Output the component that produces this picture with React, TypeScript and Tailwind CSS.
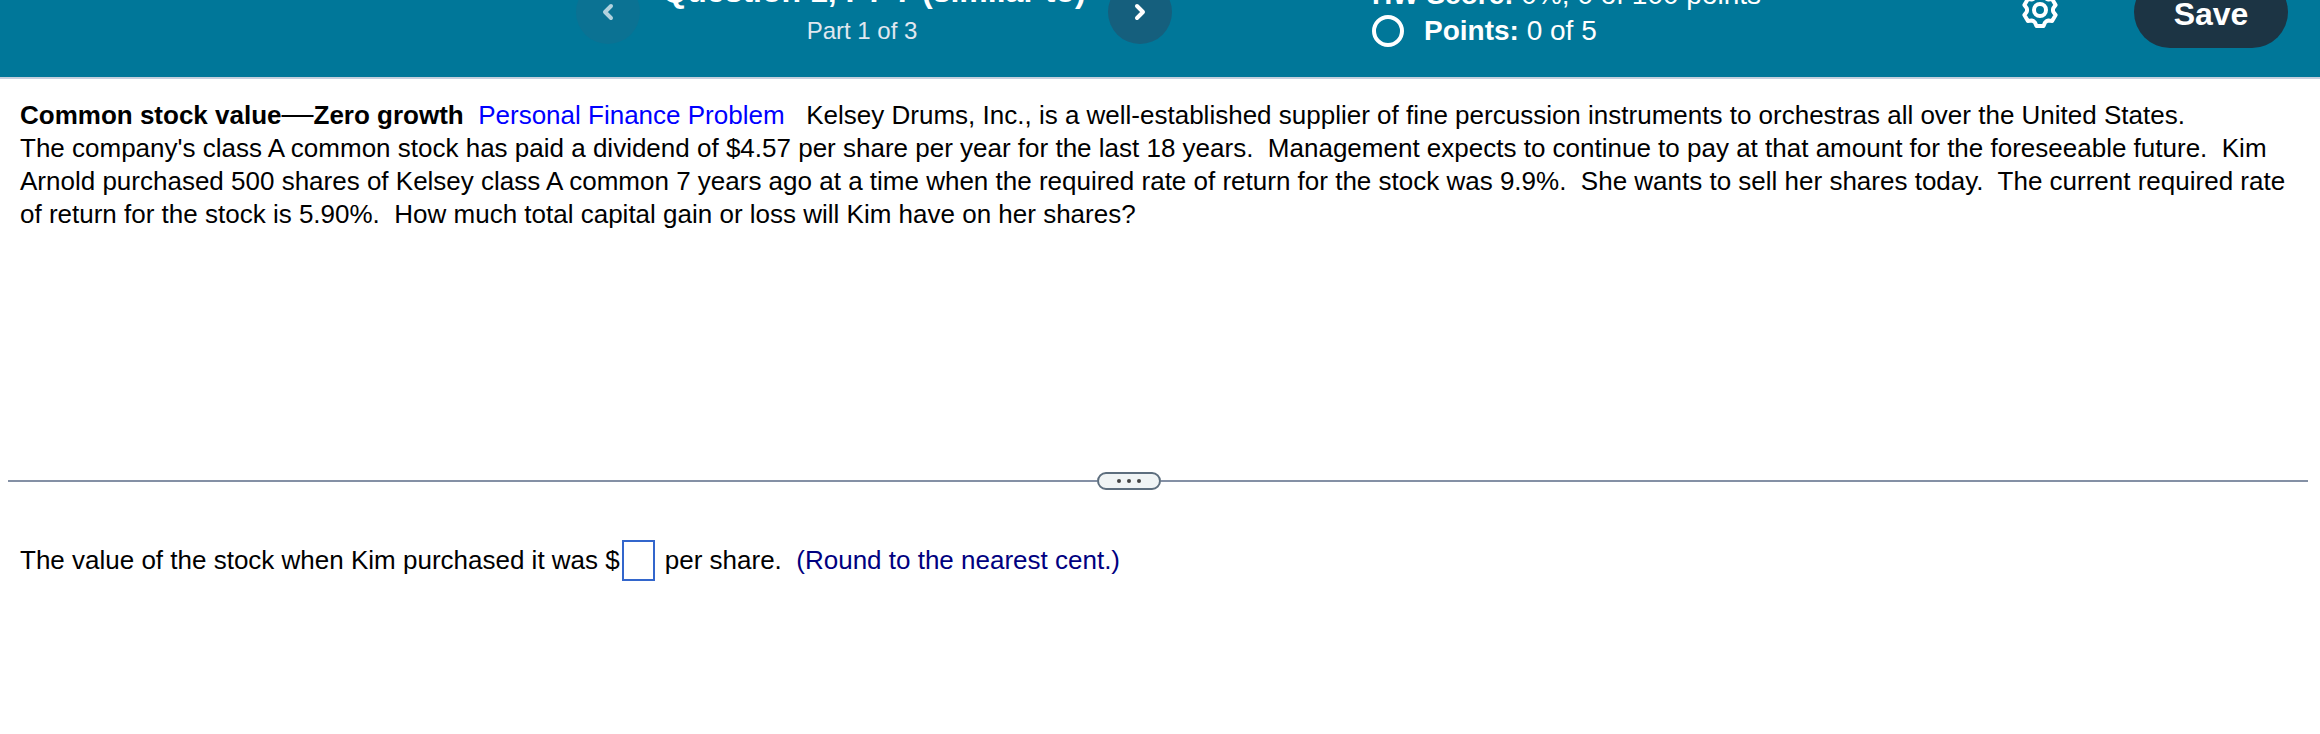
import { ChevronLeft, ChevronRight } from "lucide-react";

function GearIcon() {
  return (
    <svg width="40" height="40" viewBox="-20 -20 40 40" fill="none" stroke="#fff" strokeWidth="4" strokeLinejoin="round" aria-hidden>
      <path d="M-3.5 16H3.5L5 12.5Q6.600 10.800 8.300 10.600L12.100 11L15.600 5L13.300 1.900Q12.600 0 13.300-1.900L15.600-5L12.100-11L8.300-10.600Q6.600-10.800 5-12.500L3.500-16H-3.500L-5-12.500Q-6.600-10.800-8.300-10.600L-12.100-11L-15.600-5L-13.300-1.900Q-12.600 0-13.300 1.900L-15.600 5L-12.100 11L-8.300 10.600Q-6.600 10.800-5 12.500Z" />
      <circle r="6" />
    </svg>
  );
}

function Header() {
  return (
    <header className="h-[79px] overflow-hidden border-b-2 border-[#c5cfdd] bg-[#007799] text-white flex items-end pl-[576px] pr-8">
      <div className="w-[596px] shrink-0 flex items-center justify-between mb-7">
        <button aria-label="Previous question" className="w-16 h-16 rounded-full bg-[#0b7293] flex items-center justify-center text-[#b2d2de]">
          <ChevronLeft size={24} strokeWidth={4} />
        </button>
        <div className="h-[74px] text-center whitespace-nowrap">
          <h1 className="text-[32px] leading-8 font-bold">Question 1, P7-7 (similar to)</h1>
          <p className="text-2xl leading-12 pr-6 text-[#e0e8f0]">Part 1 of 3</p>
        </div>
        <button aria-label="Next question" className="w-16 h-16 rounded-full bg-[#155f7d] flex items-center justify-center">
          <ChevronRight size={24} strokeWidth={4} />
        </button>
      </div>

      <div className="ml-[200px] mb-7 text-[28px] leading-9 whitespace-nowrap">
        <p>
          <b>HW Score:</b> 0%, 0 of 100 points
        </p>
        <div className="flex items-center gap-5">
          <span className="w-8 h-8 rounded-full border-4 border-white" />
          <p>
            <b>Points:</b> 0 of 5
          </p>
        </div>
      </div>

      <div className="ml-auto mb-[29px] flex items-center gap-[74px]">
        <button aria-label="Settings" className="mb-1">
          <GearIcon />
        </button>
        <button className="w-[154px] h-[72px] pt-1 rounded-full bg-[#1c3444] text-[32px] font-bold">Save</button>
      </div>
    </header>
  );
}

export default function App() {
  return (
    <div
      className="min-h-screen bg-white text-black text-[26px] leading-[33px]"
      style={{ fontFamily: '"Liberation Sans", Arial, sans-serif' }}
    >
      <Header />

      <main>
        <section className="px-5 pt-[18px] h-[393px]">
          <p>
            <b>Common stock value</b>
            <span className="text-[32px] leading-none">—</span>
            <b>Zero growth</b>&nbsp;{" "}
            <span className="text-[#0000ff]">Personal Finance Problem</span>&nbsp;&nbsp; Kelsey Drums, Inc., is a
            well-established supplier of fine percussion instruments to orchestras all over the United States.&nbsp;{" "}
            The&nbsp;company's class A common stock has paid a dividend of $4.57 per share per year for the last 18
            years.&nbsp; Management expects to continue to pay at that amount for the foreseeable future.&nbsp; Kim
            Arnold purchased 500 shares of Kelsey class A common 7 years ago at a time when the required rate of return
            for the stock was 9.9%.&nbsp; She wants to sell her shares today.&nbsp; The current required rate of return
            for the stock is 5.90%.&nbsp; How much total capital gain or loss will Kim have on her shares?
          </p>
        </section>

        {/* Pane divider */}
        <div className="flex items-center pl-2 pr-3">
          <span className="h-[2px] flex-[95] bg-[#8490a5]" />
          <button
            aria-label="Resize panes"
            className="w-16 h-[18px] rounded-full border-2 border-[#5d6e7e] bg-[#f0f4f5] flex items-center justify-center gap-[6px]"
          >
            <span className="w-1 h-1 rounded-full bg-[#444]" />
            <span className="w-1 h-1 rounded-full bg-[#444]" />
            <span className="w-1 h-1 rounded-full bg-[#444]" />
          </button>
          <span className="h-[2px] flex-[100] bg-[#8490a5]" />
        </div>

        <section className="px-5 pt-[50px] flex items-center whitespace-pre">
          <label htmlFor="answer">The value of the stock when Kim purchased it was $</label>
          <input
            id="answer"
            type="text"
            className="w-[33px] h-[41px] ml-[2px] mr-[10px] border-2 border-[#3366cc] bg-white px-1 outline-none"
          />
          <span>per share.&nbsp; </span>
          <span className="text-[#000080]">(Round to the nearest cent.)</span>
        </section>
      </main>
    </div>
  );
}
